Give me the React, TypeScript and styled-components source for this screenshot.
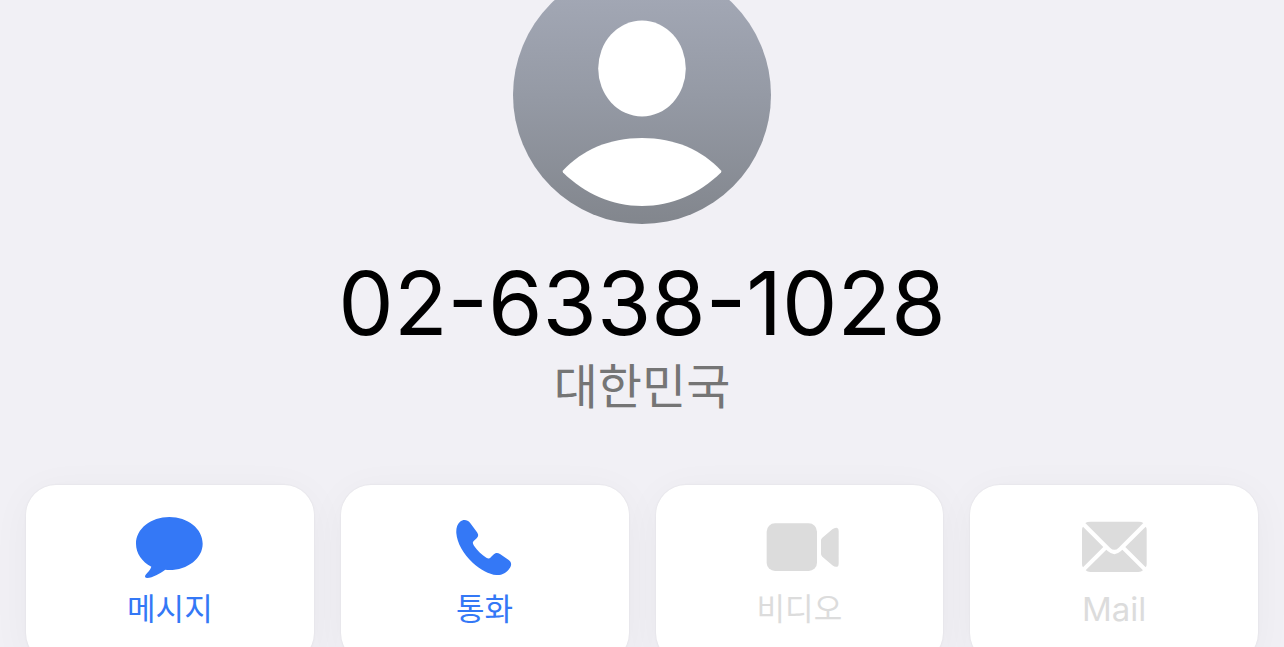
import React from "react";
import styled, { createGlobalStyle } from "styled-components";

const GlobalStyle = createGlobalStyle`
  * {
    box-sizing: border-box;
  }

  body {
    margin: 0;
    background: #f1f0f5;
    font-family: Inter, "Noto Sans CJK KR", sans-serif;
    -webkit-font-smoothing: antialiased;
  }
`;

const Page = styled.main`
  display: flex;
  flex-direction: column;
  align-items: center;
  height: 100vh;
  overflow: hidden;
  background: #f1f0f5;
`;

const Avatar = styled.svg`
  display: block;
  flex: none;
  width: 258px;
  height: 258px;
  margin-top: -34px;
`;

const PhoneNumber = styled.h1`
  flex: none;
  margin: 25px 0 0;
  color: #000;
  font-size: 88px;
  font-weight: 400;
  line-height: 108px;
  white-space: nowrap;
`;

const Region = styled.p`
  flex: none;
  margin: 0;
  color: #757575;
  font-size: 48px;
  line-height: 60px;
`;

const Actions = styled.nav`
  display: grid;
  flex: none;
  grid-template-columns: repeat(4, 1fr);
  gap: 27px;
  width: 100%;
  margin-top: 68px;
  padding: 0 26px 32px;
`;

const ActionButton = styled.button`
  display: flex;
  flex-direction: column;
  align-items: center;
  gap: 8px;
  padding: 30px 0 32px;
  border: 0;
  border-radius: 30px;
  background: #fff;
  box-shadow: 0 0 2px rgba(0, 0, 0, 0.08), 0 6px 40px rgba(30, 20, 60, 0.04);
  color: #3478f6;
  font-family: inherit;
  cursor: pointer;

  &:disabled {
    color: #dcdcdc;
    cursor: default;
  }
`;

const Label = styled.span<{ $latin?: boolean }>`
  font-size: ${({ $latin }) => ($latin ? 33 : 31)}px;
  line-height: 44px;
`;

const Icon = styled.svg`
  display: block;
  width: 80px;
  height: 64px;
  fill: currentColor;
`;

const MessageIcon = () => (
  <Icon viewBox="30 30 240 192" aria-hidden="true">
    <path d="M148 36C203 36 248 71 248 116C248 160 203 195 148 195C144 195 140 195 136 194C119 206 98 218 82 219C75 219 73 214 77 209C84 201 91 194 94 185C66 170 48 145 48 116C48 71 93 36 148 36Z" />
  </Icon>
);

const CallIcon = () => (
  <Icon viewBox="44 30 240 192" aria-hidden="true">
    <path d="M89 50C98 43 111 43 119 53L139 80C145 88 145 94 139 100L130 108C126 112 127 116 131 122C141 136 154 149 168 158C174 162 178 161 182 156L189 149C195 143 202 143 209 147L234 164C243 170 245 179 239 188C229 203 215 211 198 210C176 208 150 193 127 173C99 148 80 113 78 85C77 70 80 58 89 50Z" />
  </Icon>
);

const VideoIcon = () => (
  <Icon viewBox="58 30 240 192" aria-hidden="true">
    <rect x="81" y="55" width="151" height="143" rx="25" />
    <path d="M244 106Q244 101 248 98L278 73Q286 67 293 69Q297 71 297 78V176Q297 183 293 185Q286 187 278 181L248 155Q244 151 244 147Z" />
  </Icon>
);

const MailIcon = () => (
  <Icon viewBox="42 30 240 192" aria-hidden="true">
    <path d="M76 54Q82 50 91 50H236Q245 50 250 54L176 128Q163 141 150 128Z" />
    <path d="M66 74Q66 68 69 65L130 126L69 187Q66 184 66 177Z" />
    <path d="M260 74Q260 68 257 65L196 126L257 187Q260 184 260 177Z" />
    <path d="M77 196L139 134L144 139Q163 156 182 139L187 134L249 196Q244 201 235 201H91Q82 201 77 196Z" />
  </Icon>
);

const actions = [
  { label: "메시지", icon: MessageIcon, enabled: true },
  { label: "통화", icon: CallIcon, enabled: true },
  { label: "비디오", icon: VideoIcon, enabled: false },
  { label: "Mail", icon: MailIcon, enabled: false, latin: true },
];

export default function App() {
  return (
    <>
      <GlobalStyle />
      <Page>
        <Avatar viewBox="0 0 258 258" aria-hidden="true">
          <defs>
            <linearGradient id="avatar-fill" x1="0" y1="0" x2="0" y2="1">
              <stop offset="0" stopColor="#a6abb9" />
              <stop offset="0.5" stopColor="#959aa5" />
              <stop offset="1" stopColor="#82868d" />
            </linearGradient>
          </defs>
          <circle cx="129" cy="129" r="129" fill="url(#avatar-fill)" />
          <ellipse cx="129" cy="102.5" rx="43.8" ry="48" fill="#fff" />
          <path
            d="M50 204.500C69 184 96 172 129 172C162 172 189 184 208 204.500Q208.800 205.500 208 206.500C186 228 159 240 129 240C99 240 72 228 50 206.500Q49.200 205.500 50 204.500Z"
            fill="#fff"
          />
        </Avatar>
        <PhoneNumber>02-6338-1028</PhoneNumber>
        <Region>대한민국</Region>
        <Actions>
          {actions.map(({ label, icon: ActionIcon, enabled, latin }) => (
            <ActionButton key={label} type="button" disabled={!enabled}>
              <ActionIcon />
              <Label $latin={latin}>{label}</Label>
            </ActionButton>
          ))}
        </Actions>
      </Page>
    </>
  );
}
